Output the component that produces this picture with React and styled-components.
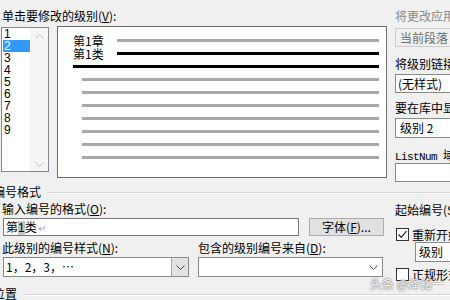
import React from "react";
import styled, { createGlobalStyle } from "styled-components";

const GlobalStyle = createGlobalStyle`
  html, body {
    margin: 0;
    padding: 0;
    background: #f0f0f0;
  }
  body {
    font-family: "Noto Sans CJK SC", "Liberation Sans", sans-serif;
    font-size: 12px;
    color: #000;
  }
`;

const Dialog = styled.div`
  width: 450px;
  height: 300px;
  overflow: hidden;
  position: relative;
  background: #f0f0f0;
`;

const TopArea = styled.div`
  display: flex;
  padding-top: 8px;
`;

const LevelPane = styled.div`
  flex: none;
  width: 393px;
`;

const FieldLabel = styled.div`
  line-height: 16px;
  height: 16px;
  white-space: nowrap;
  margin-top: ${p => p.$mt || 0}px;
  padding-left: ${p => p.$pl || 0}px;
  color: ${p => (p.$disabled ? "#8a8a8a" : "#000")};
  u {
    text-decoration: underline;
    text-underline-offset: 1px;
  }
`;

const MonoLabel = styled.div`
  margin-top: ${p => p.$mt || 0}px;
  height: 14px;
  line-height: 14px;
  white-space: nowrap;
  font-family: "Liberation Mono", "Noto Sans CJK SC", monospace;
  font-size: 11px;
  letter-spacing: -0.6px;
  span {
    font-family: "Noto Sans CJK SC", sans-serif;
    font-size: 12px;
    letter-spacing: 0;
    margin-left: 6px;
  }
`;

const LevelRow = styled.div`
  display: flex;
  align-items: flex-start;
  margin-top: 3px;
`;

const LevelList = styled.div`
  box-sizing: border-box;
  width: 48px;
  height: 145px;
  margin-left: 1px;
  border: 1px solid #828790;
  background: #fff;
  display: flex;
`;

const LevelItems = styled.div`
  width: 28px;
  padding-left: 1px;
  box-sizing: border-box;
`;

const LevelItem = styled.div`
  height: 12px;
  line-height: 12px;
  padding-left: 1px;
  font-family: "Liberation Sans", sans-serif;
  font-size: 12px;
  background: ${p => (p.$selected ? "#3399ff" : "transparent")};
  color: ${p => (p.$selected ? "#fff" : "#000")};
`;

const ScrollTrack = styled.div`
  flex: 1;
  background: #f5f5f5;
  display: flex;
  flex-direction: column;
  justify-content: space-between;
  align-items: center;
  padding: 6px 0 4px;
`;

const Preview = styled.div`
  box-sizing: border-box;
  width: 330px;
  height: 152px;
  margin-left: 8px;
  margin-top: -1px;
  background: #fff;
  border: 1px solid #6a6a6a;
  padding: 7px 7px 0 15px;
`;

const PreviewRow = styled.div`
  display: flex;
  align-items: flex-start;
  height: 13px;
  padding-left: ${p => p.$indent || 0}px;
`;

const PreviewText = styled.div`
  width: 44px;
  line-height: 13px;
  font-size: 12px;
  white-space: nowrap;
`;

const PreviewLine = styled.div`
  flex: 1;
  height: 3px;
  margin-top: 5px;
  background: ${p => (p.$dark ? "#000" : "#a9a9a9")};
`;

const SidePane = styled.div`
  flex: none;
  margin-left: 2px;
  display: flex;
  flex-direction: column;
`;

const ComboBox = styled.div`
  box-sizing: border-box;
  display: flex;
  align-items: center;
  height: ${p => p.$h || 20}px;
  width: ${p => (p.$w ? `${p.$w}px` : "80px")};
  margin-top: ${p => p.$mt || 0}px;
  margin-left: ${p => p.$ml || 0}px;
  border: 1px solid ${p => (p.$disabled ? "#cccccc" : "#8a8a8a")};
  background: ${p => (p.$disabled ? "#f0f0f0" : "#fff")};
  color: ${p => (p.$disabled ? "#6d6d6d" : "#000")};
  white-space: nowrap;
  overflow: hidden;
`;

const ComboText = styled.div`
  flex: 1;
  padding-left: ${p => p.$pl || 4}px;
  line-height: 16px;
  white-space: nowrap;
`;

const ComboArrow = styled.div`
  flex: none;
  width: 16px;
  align-self: stretch;
  display: flex;
  align-items: center;
  justify-content: center;
  background: ${p => (p.$boxed ? "#e3e3e3" : "transparent")};
  border-left: 1px solid ${p => (p.$boxed ? "#a8a8a8" : "transparent")};
  margin-right: ${p => (p.$boxed ? 0 : 1)}px;
`;

const SectionHeader = styled.div`
  display: flex;
  align-items: center;
  height: 16px;
  margin-top: ${p => p.$mt || 0}px;
`;

const SectionTitle = styled.div`
  margin-left: -7px;
  line-height: 16px;
  white-space: nowrap;
`;

const SectionRule = styled.div`
  flex: 1;
  margin-left: 6px;
  margin-top: 1px;
  border-top: 1px solid #d5d5d5;
  border-bottom: 1px solid #ffffff;
`;

const FormArea = styled.div`
  display: flex;
`;

const FormPane = styled.div`
  flex: none;
  width: 393px;
`;

const FieldRow = styled.div`
  display: flex;
  align-items: flex-start;
  margin-top: ${p => p.$mt || 0}px;
`;

const FieldColumn = styled.div`
  margin-left: ${p => p.$ml || 0}px;
`;

const TextInput = styled.div`
  box-sizing: border-box;
  width: 296px;
  height: 18px;
  margin-left: 3px;
  border: 1px solid #7a7a7a;
  background: #fff;
  padding-left: 2px;
  line-height: 16px;
  white-space: nowrap;
`;

const Marked = styled.span`
  background: #c4c4c4;
  font-family: "Liberation Sans", sans-serif;
`;

const ReturnMark = styled.span`
  color: #a0a0a0;
  font-size: 10px;
  margin-left: 1px;
`;

const PushButton = styled.div`
  box-sizing: border-box;
  width: 75px;
  height: 18px;
  margin-left: 10px;
  border: 1px solid #adadad;
  background: #e1e1e1;
  text-align: center;
  line-height: 16px;
  white-space: nowrap;
  u {
    text-decoration: underline;
  }
`;

const SidePaneLower = styled.div`
  flex: none;
  padding-left: 2px;
  display: flex;
  flex-direction: column;
`;

const CheckRow = styled.div`
  display: flex;
  align-items: center;
  height: 13px;
  margin-top: ${p => p.$mt || 0}px;
  margin-left: 1px;
  white-space: nowrap;
`;

const CheckBox = styled.div`
  box-sizing: border-box;
  flex: none;
  width: 13px;
  height: 13px;
  border: 1px solid #333;
  background: #fff;
  display: flex;
  align-items: center;
  justify-content: center;
  margin-right: 3px;
`;

const CheckLabel = styled.div`
  line-height: 16px;
`;

const Watermark = styled.div`
  position: absolute;
  left: 370px;
  top: 275px;
  font-size: 12px;
  color: #fff;
  white-space: nowrap;
  text-shadow: 0 0 1px #555, 0 0 2px #777;
  opacity: 0.9;
`;

const Chevron = ({ dir = "down", color = "#444" }) => (
  <svg width="9" height="5" viewBox="0 0 9 5">
    <path
      d={dir === "down" ? "M0.5 0.5 L4.5 4.5 L8.5 0.5" : "M0.5 4.5 L4.5 0.5 L8.5 4.5"}
      fill="none"
      stroke={color}
      strokeWidth="1"
    />
  </svg>
);

const CheckMark = () => (
  <svg width="11" height="11" viewBox="0 0 11 11">
    <path d="M1.5 5.5 L4.3 8.3 L9.5 2.2" fill="none" stroke="#222" strokeWidth="1.2" />
  </svg>
);

const levels = ["1", "2", "3", "4", "5", "6", "7", "8", "9"];

export default function App() {
  return (
    <>
      <GlobalStyle />
      <Dialog>
        <TopArea>
          <LevelPane>
            <FieldLabel $pl={2}>单击要修改的级别(<u>V</u>):</FieldLabel>
            <LevelRow>
              <LevelList>
                <LevelItems>
                  {levels.map(l => (
                    <LevelItem key={l} $selected={l === "2"}>{l}</LevelItem>
                  ))}
                </LevelItems>
                <ScrollTrack>
                  <Chevron dir="up" color="#c2c2c2" />
                  <Chevron dir="down" color="#c2c2c2" />
                </ScrollTrack>
              </LevelList>
              <Preview>
                <PreviewRow>
                  <PreviewText>第1章</PreviewText>
                  <PreviewLine />
                </PreviewRow>
                <PreviewRow>
                  <PreviewText>第1类</PreviewText>
                  <PreviewLine $dark />
                </PreviewRow>
                <PreviewRow>
                  <PreviewLine $dark />
                </PreviewRow>
                {[0, 1, 2, 3, 4, 5, 6].map(i => (
                  <PreviewRow key={i} $indent={9}>
                    <PreviewLine />
                  </PreviewRow>
                ))}
              </Preview>
            </LevelRow>
          </LevelPane>
          <SidePane>
            <FieldLabel $disabled>将更改应用于(C):</FieldLabel>
            <ComboBox $disabled $mt={4} $h={19} $w={70}>
              <ComboText>当前段落</ComboText>
            </ComboBox>
            <FieldLabel $mt={9}>将级别链接到样式(K):</FieldLabel>
            <ComboBox $mt={2} $h={19} $w={70}>
              <ComboText $pl={2}>(无样式)</ComboText>
            </ComboBox>
            <FieldLabel $mt={7}>要在库中显示的级别(H):</FieldLabel>
            <ComboBox $mt={2} $h={20} $w={70}>
              <ComboText>级别 2</ComboText>
            </ComboBox>
            <MonoLabel $mt={10}>ListNum<span>域列表名</span></MonoLabel>
            <ComboBox $mt={1} $h={19} $w={70} />
          </SidePane>
        </TopArea>

        <SectionHeader $mt={2}>
          <SectionTitle>编号格式</SectionTitle>
          <SectionRule />
        </SectionHeader>

        <FormArea>
          <FormPane>
            <FieldLabel $mt={1} $pl={2}>输入编号的格式(<u>O</u>):</FieldLabel>
            <FieldRow $mt={1}>
              <TextInput>
                第<Marked>1</Marked>类<ReturnMark>↵</ReturnMark>
              </TextInput>
              <PushButton>字体(<u>F</u>)...</PushButton>
            </FieldRow>
            <FieldRow $mt={4}>
              <FieldColumn>
                <FieldLabel $pl={2}>此级别的编号样式(<u>N</u>):</FieldLabel>
                <ComboBox $mt={1} $h={20} $w={186} $ml={3}>
                  <ComboText $pl={2}>1，2，3，…</ComboText>
                  <ComboArrow $boxed>
                    <Chevron />
                  </ComboArrow>
                </ComboBox>
              </FieldColumn>
              <FieldColumn $ml={9}>
                <FieldLabel>包含的级别编号来自(<u>D</u>):</FieldLabel>
                <ComboBox $mt={1} $h={20} $w={185}>
                  <ComboText />
                  <ComboArrow>
                    <Chevron color="#666" />
                  </ComboArrow>
                </ComboBox>
              </FieldColumn>
            </FieldRow>
          </FormPane>
          <SidePaneLower>
            <FieldLabel $mt={2}>起始编号(S):</FieldLabel>
            <CheckRow $mt={10}>
              <CheckBox>
                <CheckMark />
              </CheckBox>
              <CheckLabel>重新开始列表的间隔(R):</CheckLabel>
            </CheckRow>
            <ComboBox $mt={1} $h={20} $w={60} $ml={20}>
              <ComboText $pl={3}>级别</ComboText>
            </ComboBox>
            <CheckRow $mt={6}>
              <CheckBox />
              <CheckLabel>正规形式编号(G)</CheckLabel>
            </CheckRow>
          </SidePaneLower>
        </FormArea>

        <SectionHeader $mt={5}>
          <SectionTitle>位置</SectionTitle>
          <SectionRule />
        </SectionHeader>

        <Watermark>头条 @泽铭一</Watermark>
      </Dialog>
    </>
  );
}
